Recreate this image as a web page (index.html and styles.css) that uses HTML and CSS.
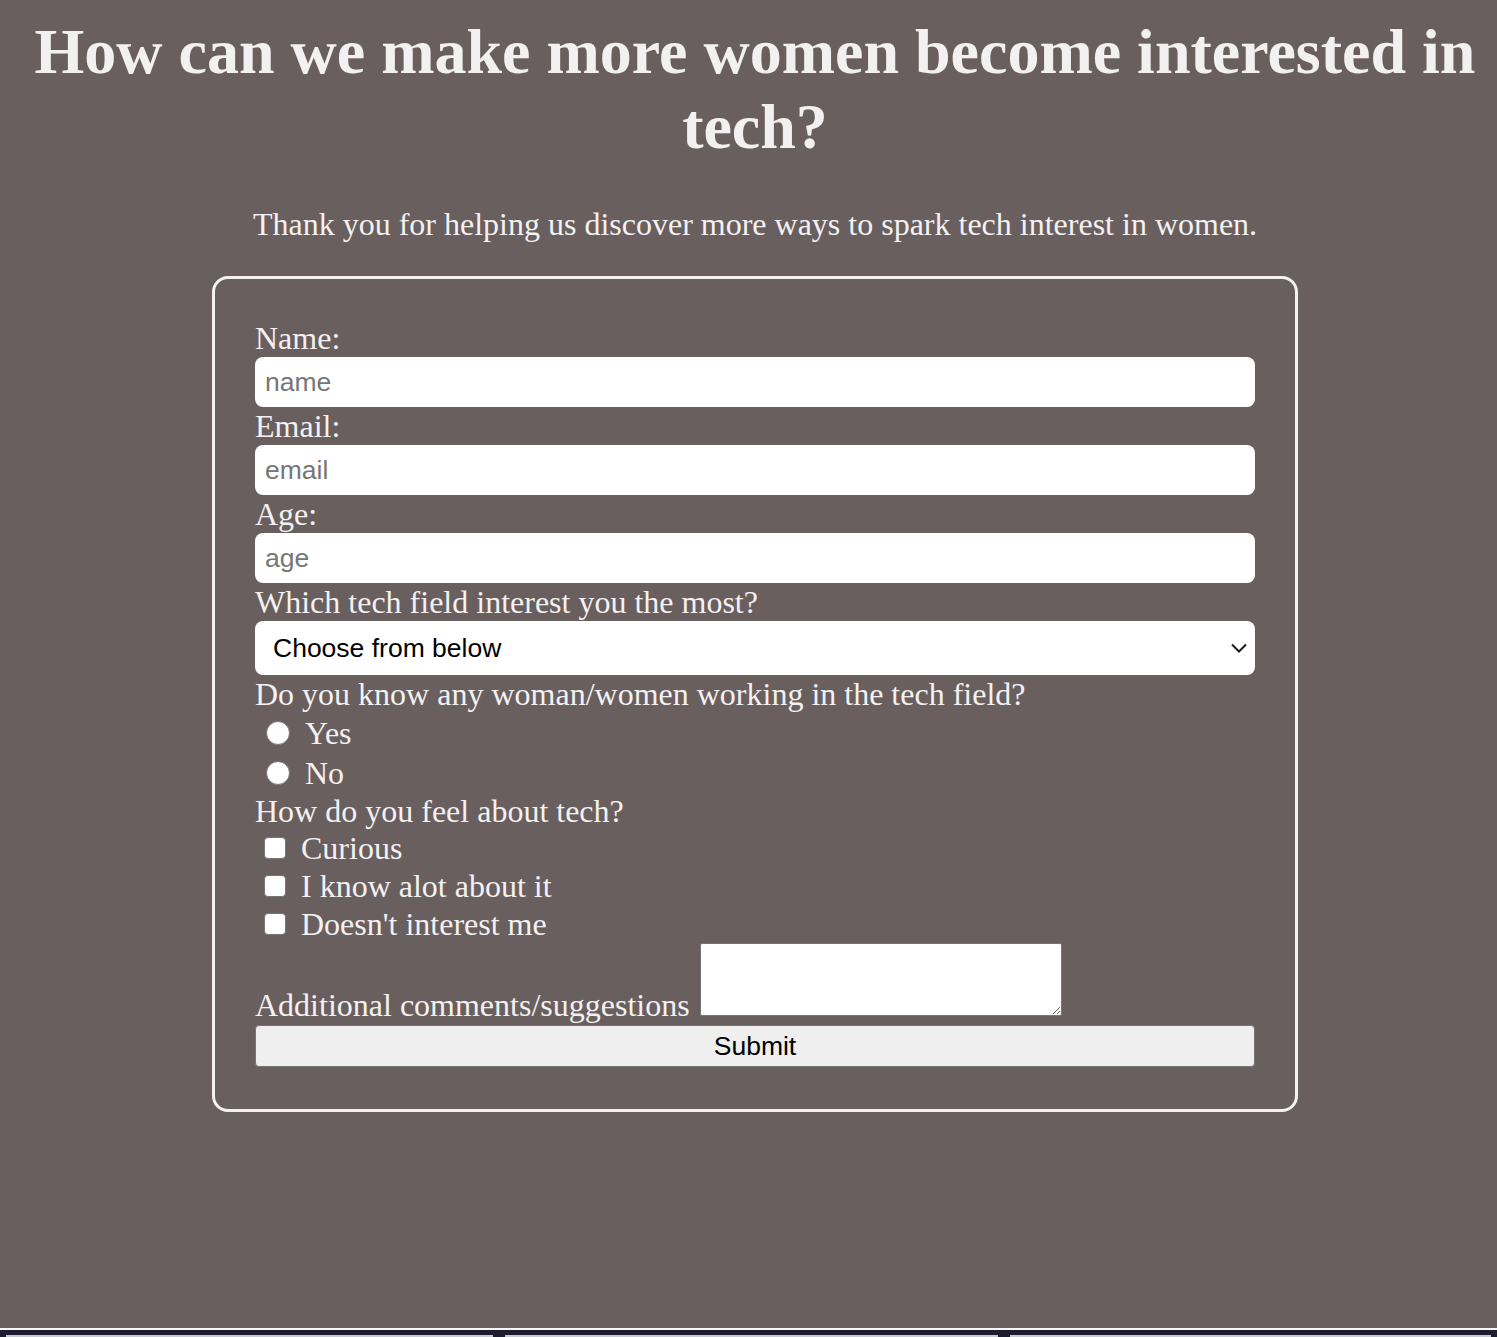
FILE: index.html
```html
<!DOCTYPE html>
<html lang="en">
<head>
<meta charset="utf-8">
<title>Women in Tech Survey</title>
<link rel="stylesheet" href="styles.css">
</head>
<body>
<main class="page">
  <h1 class="title">How can we make more women become interested in tech?</h1>
  <p class="intro">Thank you for helping us discover more ways to spark tech interest in women.</p>
  <form class="survey">
    <label class="field-label" for="name">Name:</label>
    <input class="text-input" id="name" type="text" placeholder="name">
    <label class="field-label" for="email">Email:</label>
    <input class="text-input" id="email" type="email" placeholder="email">
    <label class="field-label" for="age">Age:</label>
    <input class="text-input" id="age" type="number" placeholder="age">
    <label class="field-label" for="field">Which tech field interest you the most?</label>
    <div class="select-wrap">
      <select class="select" id="field">
        <option>Choose from below</option>
      </select>
      <svg class="chevron" width="16" height="10" viewBox="0 0 16 10"><path d="M1 1.5 L8 8.5 L15 1.5" fill="none" stroke="#1a1a1a" stroke-width="2"/></svg>
    </div>
    <p class="field-label">Do you know any woman/women working in the tech field?</p>
    <label class="radio-row"><input class="radio" type="radio" name="know"><span>Yes</span></label>
    <label class="radio-row"><input class="radio" type="radio" name="know"><span>No</span></label>
    <p class="field-label short">How do you feel about tech?</p>
    <label class="check-row"><input class="check" type="checkbox"><span>Curious</span></label>
    <label class="check-row"><input class="check" type="checkbox"><span>I know alot about it</span></label>
    <label class="check-row"><input class="check" type="checkbox"><span>Doesn't interest me</span></label>
    <div class="comment-row">
      <label class="comment-label" for="comments">Additional comments/suggestions</label>
      <textarea class="comments" id="comments"></textarea>
    </div>
    <button class="submit" type="button">Submit</button>
  </form>
</main>
<div class="divider"></div>
<section class="below">
  <div class="card"></div>
  <div class="card"></div>
  <div class="card"></div>
</section>
</body>
</html>
```

FILE: styles.css
```css
html, body {
  margin: 0;
  padding: 0;
  background: #6a5f5f;
}

body {
  font-family: "Liberation Serif", "Times New Roman", serif;
  color: #f3f1f1;
}

.page {
  height: 1328px;
  padding-left: 13px;
  box-sizing: border-box;
  overflow: hidden;
}

.title {
  margin: 14px 0 0;
  font-size: 64px;
  line-height: 75px;
  font-weight: bold;
  text-align: center;
  color: #f2f0f0;
}

.intro {
  margin: 42px 0 0;
  font-size: 32px;
  line-height: 37px;
  text-align: center;
}

.survey {
  box-sizing: border-box;
  width: 1086px;
  margin: 33px auto 0;
  padding: 40px 40px 42px;
  border: 3px solid #f3f1f1;
  border-radius: 16px;
  display: flex;
  flex-direction: column;
}

.field-label {
  display: block;
  margin: 0;
  font-size: 32px;
  line-height: 38px;
  height: 38px;
  white-space: nowrap;
}

.field-label.short {
  height: 36px;
  line-height: 36px;
}

.text-input {
  box-sizing: border-box;
  width: 1000px;
  height: 50px;
  margin: 0;
  border: none;
  border-radius: 8px;
  padding: 0 10px;
  background: #fff;
  font-family: "Liberation Sans", Arial, sans-serif;
  font-size: 26.5px;
  color: #222;
  outline: none;
}

.text-input::placeholder {
  color: #767676;
}

.select-wrap {
  position: relative;
  width: 1000px;
  height: 54px;
}

.select {
  appearance: none;
  -webkit-appearance: none;
  box-sizing: border-box;
  width: 100%;
  height: 54px;
  border: none;
  border-radius: 8px;
  padding: 0 18px;
  background: #fff;
  font-family: "Liberation Sans", Arial, sans-serif;
  font-size: 26.5px;
  color: #000;
}

.chevron {
  position: absolute;
  right: 8px;
  top: 22px;
}

.radio-row,
.check-row {
  display: flex;
  align-items: center;
  font-size: 32px;
  white-space: nowrap;
}

.radio-row {
  height: 40px;
  padding-left: 11px;
  gap: 15px;
}

.check-row {
  height: 38px;
  padding-left: 9px;
  gap: 15px;
}

.radio {
  appearance: none;
  -webkit-appearance: none;
  box-sizing: border-box;
  width: 24px;
  height: 24px;
  margin: 0;
  border: 1.5px solid #767676;
  border-radius: 50%;
  background: #fff;
}

.check {
  appearance: none;
  -webkit-appearance: none;
  box-sizing: border-box;
  width: 22px;
  height: 22px;
  margin: 0;
  border: 1.5px solid #767676;
  border-radius: 4px;
  background: #fff;
}

.comment-row {
  display: flex;
  align-items: flex-end;
  gap: 10px;
}

.comment-label {
  font-size: 32px;
  line-height: 30px;
  white-space: nowrap;
}

.comments {
  box-sizing: border-box;
  width: 362px;
  height: 73px;
  margin: 0 0 4px;
  border: 1px solid #767676;
  border-radius: 2px;
  background: #fff;
  resize: both;
}

.submit {
  box-sizing: border-box;
  width: 1000px;
  height: 42px;
  margin-top: 5px;
  border: 1px solid #767676;
  border-radius: 4px;
  background: #efefef;
  font-family: "Liberation Sans", Arial, sans-serif;
  font-size: 26.5px;
  color: #000;
  padding: 0;
}

.divider {
  height: 2px;
  background: #f6f5f7;
}

.below {
  background: #1e1d30;
  padding: 5px 6px 20px;
  display: grid;
  grid-template-columns: 487px 493px 1fr;
  gap: 12px;
}

.card {
  height: 120px;
  background: #c9c9d3;
}
```
